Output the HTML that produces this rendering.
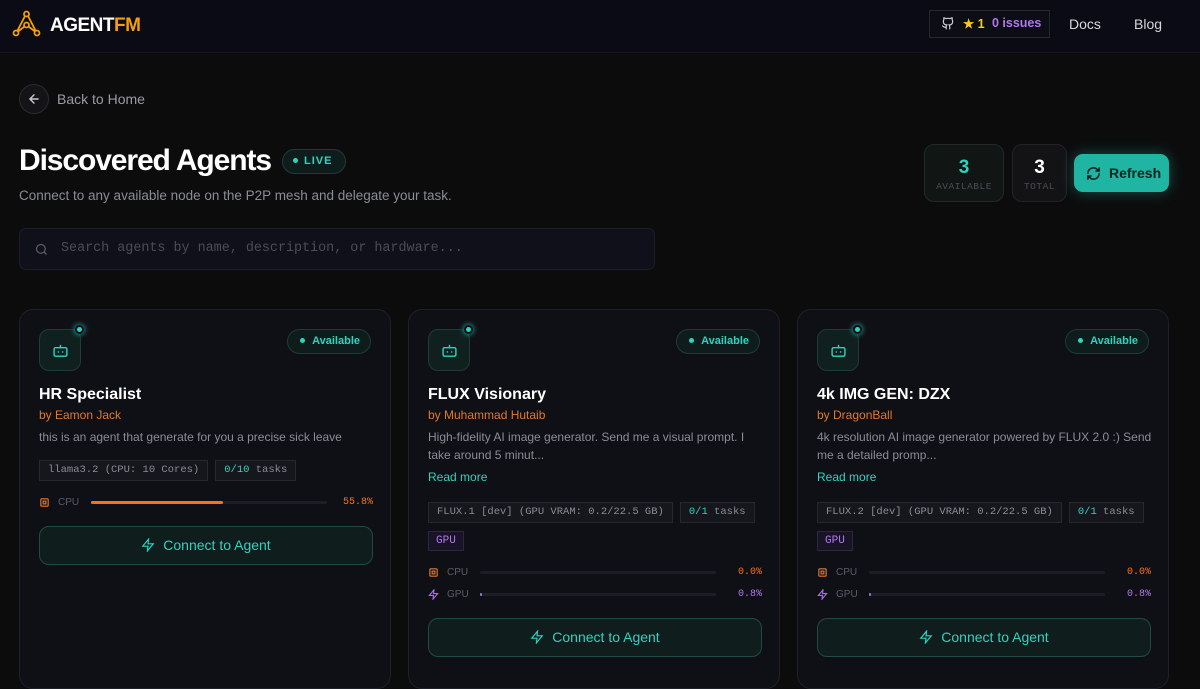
<!DOCTYPE html>
<html><head><meta charset="utf-8"><style>
*{box-sizing:border-box;margin:0;padding:0}
body{width:1200px;height:675px;overflow:hidden;background:#0c0c0d;font-family:"Liberation Sans",sans-serif;color:#fff;position:relative}
.hdr{position:absolute;left:0;top:0;width:1200px;height:53px;background:#0a0b14;border-bottom:1px solid #16171f}
.abs{position:absolute}
.mono{font-family:"Liberation Mono",monospace}
.card{position:absolute;top:309px;width:372px;height:380px;background:#0f1016;border:1px solid #1f2129;border-radius:14px}
.ib{position:absolute;left:19px;top:19px;width:42px;height:42px;border:1px solid #1d3b38;background:#10201f;border-radius:10px}
.ib .d{position:absolute;right:-4px;top:-5px;width:9px;height:9px;border-radius:50%;background:#2dd4bf;border:2px solid #0f1016;box-shadow:0 0 6px #2dd4bf}
.av{position:absolute;right:19px;top:19px;height:25px;padding:0 10px 0 12px;border:1px solid #1d3b38;background:#0f1c1c;border-radius:13px;color:#2dd4bf;font-size:11px;font-weight:bold;line-height:23px}
.av:before{content:"";display:inline-block;width:5px;height:5px;border-radius:50%;background:#2dd4bf;margin-right:7px;vertical-align:1px}
.t{position:absolute;left:19px;font-size:16px;font-weight:bold}
.by{position:absolute;left:19px;font-size:12px;color:#e0782f}
.ds{position:absolute;left:19px;width:335px;font-size:12px;color:#8a8d96;line-height:18px}
.rm{position:absolute;left:19px;font-size:12px;color:#2dd4bf}
.tags{position:absolute;left:19px;display:flex;gap:7px}
.tag{height:21px;border:1px solid #262830;background:#16171c;font-size:10.5px;color:#8a8d96;line-height:19px;padding:0 8px;font-family:"Liberation Mono",monospace;white-space:nowrap}
.tag b{color:#2dd4bf;font-weight:normal}
.gp{position:absolute;left:19px;height:20px;border:1px solid #2e2540;background:#181426;color:#b277f0;font-size:11px;line-height:18px;padding:0 7px;font-family:"Liberation Mono",monospace}
.row{position:absolute;left:19px;width:334px;height:12px;font-size:10px;color:#5a5d66}
.row .ic{position:absolute;left:0;top:0}
.row .l{position:absolute;left:19px;top:0}
.row .bar{position:absolute;left:52px;right:46px;top:4px;height:3px;background:#1d1e25;border-radius:2px}
.row .bar i{display:block;height:3px;border-radius:2px}
.row .v{position:absolute;right:0;top:0;font-family:"Liberation Mono",monospace;font-size:10px}
.btn{position:absolute;left:19px;width:334px;height:39px;border:1px solid #1f4a45;background:#0f1d1d;border-radius:10px;color:#2dd4bf;font-size:14px;text-align:center;line-height:37px}
.btn svg{vertical-align:-2px;margin-right:8px}
</style></head><body>
<div class="hdr">
<svg class="abs" style="left:12px;top:10px" width="29" height="27" viewBox="0 0 29 27" fill="none" stroke="#f59e0b" stroke-width="1.8"><circle cx="14.5" cy="4" r="2.5"/><circle cx="4" cy="23" r="2.5"/><circle cx="25" cy="23" r="2.5"/><circle cx="14.5" cy="15" r="2.5"/><path d="M13 6 5.5 20.5M16 6l7.5 14.5M6 21.5l6.5-5M23 21.5l-6.5-5"/></svg>
<div class="abs" style="left:50px;top:15px;font-size:19px;font-weight:bold;letter-spacing:-0.5px">AGENT<span style="color:#f59e0b">FM</span></div>
<div class="abs" style="left:929px;top:10px;width:121px;height:28px;border:1px solid #262830;background:#0c0d15"></div>
<svg class="abs" style="left:941px;top:16px" width="14" height="15" viewBox="0 0 24 24" fill="none" stroke="#cfd1d6" stroke-width="2"><path d="M15 22v-4a4.8 4.8 0 0 0-1-3.5c3 0 6-2 6-5.5.1-1.3-.3-2.5-1-3.5.3-1.2.3-2.4 0-3.5 0 0-1 0-3 1.5-2.6-.5-5.4-.5-8 0C6 2 5 2 5 2c-.3 1.1-.3 2.3 0 3.5A5.4 5.4 0 0 0 4 9c0 3.5 3 5.5 6 5.5-.4.5-.7 1-.9 1.6-.2.6-.2 1.3-.1 1.9v4M9 18c-4.5 2-5-2-7-2"/></svg>
<div class="abs" style="left:963px;top:16px;font-size:12.5px;font-weight:bold;color:#facc15">★ 1</div>
<div class="abs" style="left:992px;top:16px;font-size:12.5px;font-weight:bold;color:#b277f0">0 issues</div>
<div class="abs" style="left:1069px;top:16px;font-size:14px;color:#d6d8dd">Docs</div>
<div class="abs" style="left:1134px;top:16px;font-size:14px;color:#d6d8dd">Blog</div>
</div>
<div class="abs" style="left:19px;top:84px;width:30px;height:30px;border-radius:50%;border:1px solid #2a2b30;background:#141416"></div>
<svg class="abs" style="left:27px;top:92px" width="14" height="14" viewBox="0 0 24 24" fill="none" stroke="#c9cbd0" stroke-width="2.4" stroke-linecap="round"><path d="M19 12H5M12 5l-7 7 7 7"/></svg>
<div class="abs" style="left:57px;top:91px;font-size:14px;color:#9a9ca4">Back to Home</div>
<div class="abs" style="left:19px;top:144px;font-size:30px;font-weight:bold;letter-spacing:-1.1px">Discovered Agents</div>
<div class="abs" style="left:282px;top:149px;width:64px;height:25px;border:1px solid #1d3b38;background:#0f1c1c;border-radius:13px;color:#2dd4bf;font-size:11px;font-weight:bold;letter-spacing:1px;line-height:23px;padding-left:10px"><span style="display:inline-block;width:5px;height:5px;border-radius:50%;background:#2dd4bf;margin-right:6px;vertical-align:1px"></span>LIVE</div>
<div class="abs" style="left:19px;top:188px;font-size:13.5px;color:#8a8d96">Connect to any available node on the P2P mesh and delegate your task.</div>
<div class="abs" style="left:19px;top:228px;width:636px;height:42px;border:1px solid #1c1d28;background:#0f1019;border-radius:7px"></div>
<svg class="abs" style="left:34px;top:242px" width="15" height="15" viewBox="0 0 24 24" fill="none" stroke="#5a5d66" stroke-width="2"><circle cx="11" cy="11" r="7"/><path d="m20 20-4-4"/></svg>
<div class="abs mono" style="left:61px;top:241px;font-size:13.4px;color:#4a4d56">Search agents by name, description, or hardware...</div>
<div class="abs" style="left:924px;top:144px;width:80px;height:58px;border:1px solid #1f2a29;background:#111615;border-radius:10px;text-align:center"><div style="font-size:19px;font-weight:bold;color:#2dd4bf;margin-top:12px">3</div><div class="mono" style="font-size:9.5px;color:#4a4d56;letter-spacing:.5px;margin-top:2px">AVAILABLE</div></div>
<div class="abs" style="left:1012px;top:144px;width:55px;height:58px;border:1px solid #222328;background:#131316;border-radius:10px;text-align:center"><div style="font-size:19px;font-weight:bold;margin-top:12px">3</div><div class="mono" style="font-size:9.5px;color:#4a4d56;letter-spacing:.5px;margin-top:2px">TOTAL</div></div>
<div class="abs" style="left:1074px;top:154px;width:95px;height:38px;background:#1fb5a2;border-radius:9px;box-shadow:0 0 14px rgba(45,212,191,.35)"></div>
<div class="abs" style="left:1109px;top:165px;font-size:14px;font-weight:bold;color:#062320">Refresh</div>
<svg class="abs" style="left:1086px;top:166px" width="15" height="15" viewBox="0 0 24 24" fill="none" stroke="#062320" stroke-width="2.4" stroke-linecap="round"><path d="M3 12a9 9 0 0 1 15-6.7L21 8M21 3v5h-5M21 12a9 9 0 0 1-15 6.7L3 16M3 21v-5h5"/></svg>

<!-- card 1 -->
<div class="card" style="left:19px">
<div class="ib"><div class="d"></div><svg style="position:absolute;left:12px;top:12px" width="17" height="17" viewBox="0 0 24 24" fill="none" stroke="#2dd4bf" stroke-width="2"><rect x="3" y="8" width="18" height="12" rx="2"/><path d="M12 8V4M9 13v2M15 13v2"/></svg></div>
<div class="av">Available</div>
<div class="t" style="top:76px">HR Specialist</div>
<div class="by" style="top:98px">by Eamon Jack</div>
<div class="ds" style="top:118px">this is an agent that generate for you a precise sick leave</div>
<div class="tags" style="top:150px"><div class="tag">llama3.2 (CPU: 10 Cores)</div><div class="tag"><b>0/10</b> tasks</div></div>
<div class="row" style="top:187px"><svg class="ic" width="11" height="11" viewBox="0 0 24 24" fill="none" stroke="#e0782f" stroke-width="2.5"><rect x="4" y="4" width="16" height="16" rx="2"/><rect x="9" y="9" width="6" height="6"/></svg><span class="l">CPU</span><div class="bar"><i style="width:56%;background:#f97316"></i></div><span class="v" style="color:#f97316">55.8%</span></div>
<div class="btn" style="top:216px"><svg width="14" height="14" viewBox="0 0 24 24" fill="none" stroke="#2dd4bf" stroke-width="2"><path d="M13 2 3 14h9l-1 8 10-12h-9l1-8z"/></svg>Connect to Agent</div>
</div>

<!-- card 2 -->
<div class="card" style="left:408px">
<div class="ib"><div class="d"></div><svg style="position:absolute;left:12px;top:12px" width="17" height="17" viewBox="0 0 24 24" fill="none" stroke="#2dd4bf" stroke-width="2"><rect x="3" y="8" width="18" height="12" rx="2"/><path d="M12 8V4M9 13v2M15 13v2"/></svg></div>
<div class="av">Available</div>
<div class="t" style="top:76px">FLUX Visionary</div>
<div class="by" style="top:98px">by Muhammad Hutaib</div>
<div class="ds" style="top:118px">High-fidelity AI image generator. Send me a visual prompt. I take around 5 minut...</div>
<div class="rm" style="top:160px">Read more</div>
<div class="tags" style="top:192px"><div class="tag">FLUX.1 [dev] (GPU VRAM: 0.2/22.5 GB)</div><div class="tag"><b>0/1</b> tasks</div></div>
<div class="gp" style="top:221px">GPU</div>
<div class="row" style="top:257px"><svg class="ic" width="11" height="11" viewBox="0 0 24 24" fill="none" stroke="#e0782f" stroke-width="2.5"><rect x="4" y="4" width="16" height="16" rx="2"/><rect x="9" y="9" width="6" height="6"/></svg><span class="l">CPU</span><div class="bar"></div><span class="v" style="color:#f97316">0.0%</span></div>
<div class="row" style="top:279px"><svg class="ic" width="11" height="11" viewBox="0 0 24 24" fill="none" stroke="#a36ee8" stroke-width="2.5"><path d="M13 2 3 14h9l-1 8 10-12h-9l1-8z"/></svg><span class="l">GPU</span><div class="bar"><i style="width:1%;background:#a36ee8"></i></div><span class="v" style="color:#b277f0">0.8%</span></div>
<div class="btn" style="top:308px"><svg width="14" height="14" viewBox="0 0 24 24" fill="none" stroke="#2dd4bf" stroke-width="2"><path d="M13 2 3 14h9l-1 8 10-12h-9l1-8z"/></svg>Connect to Agent</div>
</div>

<!-- card 3 -->
<div class="card" style="left:797px">
<div class="ib"><div class="d"></div><svg style="position:absolute;left:12px;top:12px" width="17" height="17" viewBox="0 0 24 24" fill="none" stroke="#2dd4bf" stroke-width="2"><rect x="3" y="8" width="18" height="12" rx="2"/><path d="M12 8V4M9 13v2M15 13v2"/></svg></div>
<div class="av">Available</div>
<div class="t" style="top:76px">4k IMG GEN: DZX</div>
<div class="by" style="top:98px">by DragonBall</div>
<div class="ds" style="top:118px">4k resolution AI image generator powered by FLUX 2.0 :) Send me a detailed promp...</div>
<div class="rm" style="top:160px">Read more</div>
<div class="tags" style="top:192px"><div class="tag">FLUX.2 [dev] (GPU VRAM: 0.2/22.5 GB)</div><div class="tag"><b>0/1</b> tasks</div></div>
<div class="gp" style="top:221px">GPU</div>
<div class="row" style="top:257px"><svg class="ic" width="11" height="11" viewBox="0 0 24 24" fill="none" stroke="#e0782f" stroke-width="2.5"><rect x="4" y="4" width="16" height="16" rx="2"/><rect x="9" y="9" width="6" height="6"/></svg><span class="l">CPU</span><div class="bar"></div><span class="v" style="color:#f97316">0.0%</span></div>
<div class="row" style="top:279px"><svg class="ic" width="11" height="11" viewBox="0 0 24 24" fill="none" stroke="#a36ee8" stroke-width="2.5"><path d="M13 2 3 14h9l-1 8 10-12h-9l1-8z"/></svg><span class="l">GPU</span><div class="bar"><i style="width:1%;background:#a36ee8"></i></div><span class="v" style="color:#b277f0">0.8%</span></div>
<div class="btn" style="top:308px"><svg width="14" height="14" viewBox="0 0 24 24" fill="none" stroke="#2dd4bf" stroke-width="2"><path d="M13 2 3 14h9l-1 8 10-12h-9l1-8z"/></svg>Connect to Agent</div>
</div>
</body></html>
